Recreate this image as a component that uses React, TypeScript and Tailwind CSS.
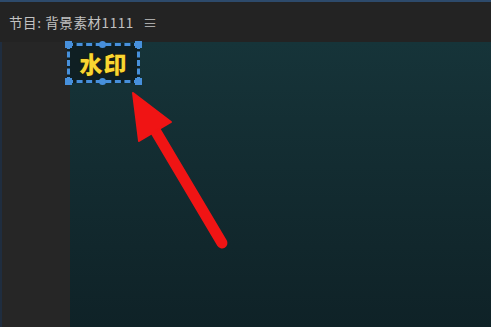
export default function App() {
  return (
    <div
      className="relative w-[491px] h-[327px] overflow-hidden bg-[#232323] flex flex-col"
      style={{ fontFamily: '"Noto Sans CJK SC", "Noto Sans", sans-serif' }}
    >
      {/* top bar */}
      <div className="h-[2px] bg-[#2d4a6b]" />
      <div className="h-[40px] flex items-center pl-[9px] text-[13.5px] text-[#c2c2c2] tracking-[0.6px]">
        <span>节目: 背景素材1111</span>
        <span className="ml-[9px] text-[14px] text-[#a8a8a8]">≡</span>
      </div>

      {/* body */}
      <div className="flex flex-1">
        <div className="w-[70px] bg-[#262626] border-l-[2px] border-[#1f2d3f]" />
        <div className="flex-1 bg-gradient-to-b from-[#163439] to-[#0f2227] relative">
          {/* watermark box */}
          <div className="absolute left-[-3px] top-[1px] w-[73px] h-[40px] border-[3px] border-dashed border-[#4790dc] bg-[#0f1f23] flex items-center justify-center">
            <span
              className="text-[23px] font-black text-[#f8d632] leading-none tracking-[1px]"
              style={{ WebkitTextStroke: "1px #2b2000", paintOrder: "stroke fill" }}
            >
              水印
            </span>
            <span className="absolute -left-[5px] -top-[5px] w-[7px] h-[7px] bg-[#4790dc]" />
            <span className="absolute -right-[5px] -top-[5px] w-[7px] h-[7px] bg-[#4790dc]" />
            <span className="absolute -left-[5px] -bottom-[5px] w-[7px] h-[7px] bg-[#4790dc]" />
            <span className="absolute -right-[5px] -bottom-[5px] w-[7px] h-[7px] bg-[#4790dc]" />
            <span className="absolute left-[29px] -top-[5px] w-[7px] h-[7px] rounded-full bg-[#4790dc]" />
            <span className="absolute left-[29px] -bottom-[5px] w-[7px] h-[7px] rounded-full bg-[#4790dc]" />
          </div>
        </div>
      </div>

      {/* red arrow annotation */}
      <svg className="absolute inset-0" width="491" height="327" viewBox="0 0 491 327">
        <line x1="222" y1="243" x2="152" y2="125" stroke="#f01414" strokeWidth="11" strokeLinecap="round" />
        <polygon points="133,93 171,122 139,141" fill="#f01414" stroke="#f01414" strokeWidth="2" strokeLinejoin="round" />
      </svg>
    </div>
  )
}
